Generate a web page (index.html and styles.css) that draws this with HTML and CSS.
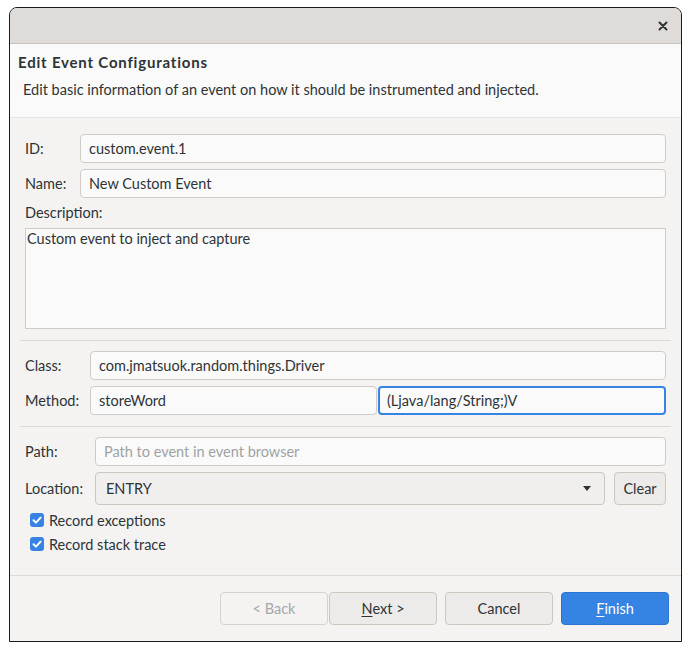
FILE: index.html
```html
<!DOCTYPE html>
<html>
<head>
<meta charset="utf-8">
<link rel="stylesheet" href="styles.css">
</head>
<body>
<div class="window">
  <div class="titlebar">
    <span class="close">
      <svg width="10" height="10" viewBox="0 0 10 10"><path d="M1.5 1.5 L8.5 8.5 M8.5 1.5 L1.5 8.5" stroke="#2e3436" stroke-width="2" stroke-linecap="round"/></svg>
    </span>
  </div>
  <div class="header">
    <div class="h-title">Edit Event Configurations</div>
    <div class="h-desc">Edit basic information of an event on how it should be instrumented and injected.</div>
  </div>
  <div class="body">
    <div class="row">
      <label class="lbl w55">ID:</label>
      <div class="entry grow">custom.event.1</div>
    </div>
    <div class="row">
      <label class="lbl w55">Name:</label>
      <div class="entry grow">New Custom Event</div>
    </div>
    <div class="desc-lbl">Description:</div>
    <div class="textarea">Custom event to inject and capture</div>
    <div class="sep"></div>
    <div class="row">
      <label class="lbl w65">Class:</label>
      <div class="entry grow">com.jmatsuok.random.things.Driver</div>
    </div>
    <div class="row">
      <label class="lbl w65">Method:</label>
      <div class="entry half">storeWord</div>
      <div class="entry half focus">(Ljava/lang/String;)V</div>
    </div>
    <div class="sep"></div>
    <div class="row">
      <label class="lbl w70">Path:</label>
      <div class="entry grow placeholder">Path to event in event browser</div>
    </div>
    <div class="row loc">
      <label class="lbl w70">Location:</label>
      <div class="combo">
        <span>ENTRY</span>
        <svg width="10" height="6" viewBox="0 0 10 6"><path d="M1 0 L9 0 L5 5 Z" fill="#2e3436"/></svg>
      </div>
      <div class="btn clear">Clear</div>
    </div>
    <div class="check-row">
      <span class="cb"><svg width="14" height="14" viewBox="0 0 14 14"><path d="M3.5 7.2 L6 9.6 L10.6 4.6" stroke="#fff" stroke-width="2" fill="none" stroke-linecap="round" stroke-linejoin="round"/></svg></span>
      <span>Record exceptions</span>
    </div>
    <div class="check-row">
      <span class="cb"><svg width="14" height="14" viewBox="0 0 14 14"><path d="M3.5 7.2 L6 9.6 L10.6 4.6" stroke="#fff" stroke-width="2" fill="none" stroke-linecap="round" stroke-linejoin="round"/></svg></span>
      <span>Record stack trace</span>
    </div>
  </div>
  <div class="footer">
    <div class="btn fbtn disabled">&lt; Back</div>
    <div class="btn fbtn next"><u>N</u>ext &gt;</div>
    <div class="btn fbtn cancel">Cancel</div>
    <div class="btn fbtn primary"><u>F</u>inish</div>
  </div>
</div>
</body>
</html>
```
FILE: styles.css
```css
html, body {
  margin: 0;
  padding: 0;
  background: #ffffff;
}
body {
  font-family: Lato, "Noto Sans", sans-serif;
  font-size: 14.5px;
  color: #2e3436;
}
.window {
  margin: 7px 0 0 9px;
  width: 671px;
  height: 633px;
  border: 1px solid #1a1a1a;
  border-radius: 8px 8px 0 0;
  overflow: hidden;
  display: flex;
  flex-direction: column;
  background: #f4f3f2;
}
.titlebar {
  height: 35px;
  flex: none;
  background: #dedbd8;
  border-bottom: 1px solid #c8c4bf;
  display: flex;
  align-items: center;
  justify-content: flex-end;
  padding-right: 13px;
}
.close {
  display: flex;
  width: 10px;
  height: 10px;
}
.header {
  height: 74px;
  flex: none;
  background: #fafafa;
  border-bottom: 1px solid #e6e3e0;
  padding: 0 8px;
  box-sizing: border-box;
}
.h-title {
  font-weight: bold;
  font-size: 15px;
  letter-spacing: 0.8px;
  margin-top: 9px;
  line-height: 18px;
}
.h-desc {
  margin: 10px 0 0 5px;
  line-height: 18px;
}
.body {
  flex: 1;
  padding: 16px 15px 0 15px;
  display: flex;
  flex-direction: column;
  gap: 6px;
  border-bottom: 1px solid #dcd8d4;
}
.row {
  display: flex;
  align-items: center;
  height: 29px;
  flex: none;
}
.row.loc {
  height: 33px;
}
.lbl {
  flex: none;
}
.w55 { width: 55px; }
.w65 { width: 65px; }
.w70 { width: 70px; }
.entry {
  height: 29px;
  box-sizing: border-box;
  border: 1px solid #d0cbc6;
  border-radius: 4px;
  background: #fafafa;
  display: flex;
  align-items: center;
  padding-left: 8px;
  white-space: nowrap;
}
.grow { flex: 1; }
.half { flex: 1; }
.half + .half { margin-left: 1px; }
.entry.focus {
  border: 2px solid #3584e4;
  padding-left: 7px;
}
.entry.placeholder {
  color: #a0a3a4;
}
.desc-lbl {
  line-height: 18px;
  flex: none;
}
.textarea {
  height: 101px;
  flex: none;
  box-sizing: border-box;
  border: 1px solid #d0cbc6;
  background: #fafafa;
  padding: 1px 1px;
  line-height: 18px;
}
.sep {
  height: 1px;
  flex: none;
  background: #dcd8d4;
  margin: 5px -5px 4px -5px;
}
.combo {
  flex: 1;
  height: 33px;
  box-sizing: border-box;
  border: 1px solid #cdc7c2;
  border-radius: 4px;
  background: #f0efee;
  display: flex;
  align-items: center;
  justify-content: space-between;
  padding: 0 12px 0 10px;
}
.btn {
  height: 33px;
  box-sizing: border-box;
  border: 1px solid #cdc7c2;
  border-radius: 4px;
  background: #edebe9;
  display: flex;
  align-items: center;
  justify-content: center;
}
.clear {
  width: 52px;
  margin-left: 9px;
}
.check-row {
  display: flex;
  align-items: center;
  height: 18px;
  flex: none;
  padding-left: 5px;
  gap: 5px;
}
.cb {
  width: 14px;
  height: 14px;
  border-radius: 3px;
  background: #3584e4;
  display: flex;
}
.footer {
  height: 65px;
  flex: none;
  display: flex;
  align-items: center;
  justify-content: flex-end;
  padding: 0 12px 0 0;
}
.fbtn {
  width: 108px;
}
.disabled {
  color: #a5a8a9;
  background: #f4f3f2;
  border-color: #d6d2ce;
}
.next { margin-left: 1px; }
.cancel { margin-left: 8px; }
.primary {
  margin-left: 8px;
  background: #3584e4;
  border-color: #2a76d2;
  color: #ffffff;
}
u { text-underline-offset: 2px; }
```
